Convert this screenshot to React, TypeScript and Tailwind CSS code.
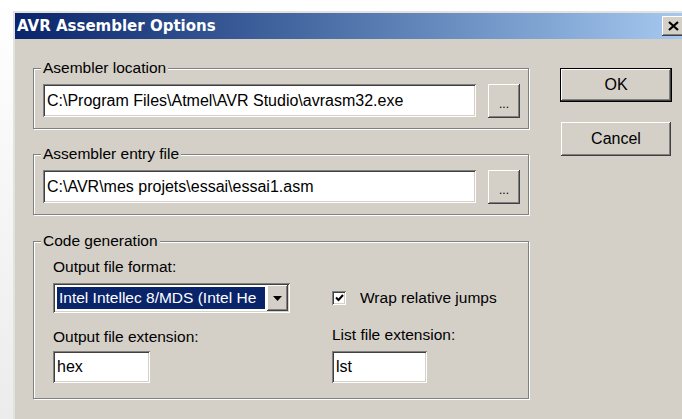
import React from 'react';

// Win2k-style bevels
const raised =
  'bg-[#d4d0c8] shadow-[inset_-1px_-1px_0_#404040,inset_1px_1px_0_#fff,inset_-2px_-2px_0_#808080,inset_2px_2px_0_#d4d0c8]';
const sunken =
  'bg-white shadow-[inset_1px_1px_0_#808080,inset_-1px_-1px_0_#fff,inset_2px_2px_0_#404040,inset_-2px_-2px_0_#d4d0c8]';
const groupBox =
  'w-[496px] border border-[#808080] shadow-[inset_1px_1px_0_#fff,1px_1px_0_#fff]';
const legend = 'ml-[7px] px-[2px] bg-[#d4d0c8] text-[15.5px] leading-[18px]';

const PathRow: React.FC<{ value: string }> = ({ value }) => (
  <div className="flex items-start pl-[9px] pt-[7px] pb-[10px]">
    <div className={`${sunken} w-[433px] h-[33px] flex items-center pl-[4px] text-[16px] whitespace-nowrap overflow-hidden`}>
      {value}
    </div>
    <button className={`${raised} ml-[12px] w-[32px] h-[34px] flex items-end justify-center pb-[8px] text-[12px] leading-none`}>
      ...
    </button>
  </div>
);

const App: React.FC = () => {
  return (
    <div
      className="w-[682px] h-[419px] overflow-hidden bg-gradient-to-b from-white to-[#ececec] pl-[13px] pt-[11px] text-black"
      style={{ fontFamily: '"Liberation Sans", Arial, sans-serif' }}
    >
      <div className="w-[674px] h-[420px] bg-[#d4d0c8] border-t-2 border-l-2 border-t-[#e4e2de] border-l-[#e4e2de]">
        {/* title bar */}
        <div className="h-[26px] flex items-center justify-between pl-[2px] pr-[3px] bg-gradient-to-r from-[#0a246a] to-[#a6caf0]">
          <span
            className="text-white font-bold text-[15px] leading-none"
            style={{ fontFamily: '"DejaVu Sans", Verdana, sans-serif' }}
          >
            AVR Assembler Options
          </span>
          <button className={`${raised} w-[22px] h-[20px] flex items-center justify-center`}>
            <svg width="11" height="10" viewBox="0 0 11 10">
              <path d="M1 1 L10 9 M10 1 L1 9" stroke="#000" strokeWidth="2.2" />
            </svg>
          </button>
        </div>

        <div className="flex pt-[20px] pl-[18px]">
          <div className="flex flex-col">
            <fieldset className={groupBox}>
              <legend className={legend}>Asembler location</legend>
              <PathRow value="C:\Program Files\Atmel\AVR Studio\avrasm32.exe" />
            </fieldset>

            <fieldset className={`${groupBox} mt-[16px]`}>
              <legend className={legend}>Assembler entry file</legend>
              <PathRow value="C:\AVR\mes projets\essai\essai1.asm" />
            </fieldset>

            <fieldset className={`${groupBox} mt-[17px]`}>
              <legend className={legend}>Code generation</legend>
              <div className="pl-[19px] pt-[8px] pb-[15px] text-[15.5px]">
                <div className="leading-[18px]">Output file format:</div>
                <div className="flex items-center mt-[7px]">
                  <div className={`${sunken} w-[237px] h-[30px] flex p-[2px]`}>
                    <div className="flex-1 p-[2px] overflow-hidden">
                      <div className="h-full bg-[#0a246a] text-white text-[15.5px] pl-[2px] flex items-center whitespace-nowrap">
                        Intel Intellec 8/MDS (Intel He
                      </div>
                    </div>
                    <div className={`${raised} w-[21px] h-full flex items-center justify-center`}>
                      <svg width="9" height="5" viewBox="0 0 9 5">
                        <path d="M0 0 H9 L4.5 5 Z" fill="#000" />
                      </svg>
                    </div>
                  </div>
                  <div className="ml-[42px] flex items-center">
                    <div className={`${sunken} w-[14px] h-[14px] flex items-center justify-center`}>
                      <svg width="9" height="8" viewBox="0 0 9 8">
                        <path d="M1 3.5 L3.5 6 L8 1" stroke="#000" strokeWidth="2" fill="none" />
                      </svg>
                    </div>
                    <span className="ml-[14px] leading-[18px]">Wrap relative jumps</span>
                  </div>
                </div>
                <div className="flex mt-[15px]">
                  <div className="w-[279px]">
                    <div className="leading-[18px]">Output file extension:</div>
                    <div className={`${sunken} mt-[5px] w-[97px] h-[32px] flex items-center pl-[4px] text-[16px]`}>hex</div>
                  </div>
                  <div>
                    <div className="leading-[18px] -mt-[2px]">List file extension:</div>
                    <div className={`${sunken} mt-[7px] w-[95px] h-[32px] flex items-center pl-[4px] text-[16px]`}>lst</div>
                  </div>
                </div>
              </div>
            </fieldset>
          </div>

          <div className="flex flex-col ml-[31px] pt-[9px]">
            <button className="w-[112px] h-[34px] border border-black">
              <div className={`${raised} w-full h-full flex items-center justify-center text-[16px]`}>OK</div>
            </button>
            <button className={`${raised} mt-[20px] ml-[1px] w-[110px] h-[34px] flex items-center justify-center text-[16px]`}>
              Cancel
            </button>
          </div>
        </div>
      </div>
    </div>
  );
};

export default App;
